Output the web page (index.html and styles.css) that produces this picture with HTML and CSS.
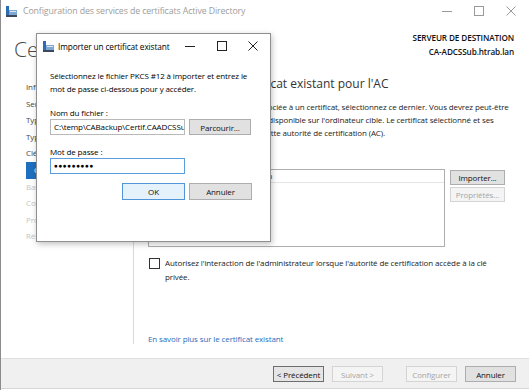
FILE: index.html
```html
<!DOCTYPE html>
<html lang="fr">
<head>
    <meta charset="UTF-8">
    <title>Configuration des services de certificats Active Directory</title>
    <link rel="stylesheet" href="styles.css">
</head>
<body>
    <div class="window">
        <div class="titlebar">
            <svg class="app-icon" width="11" height="11" viewBox="0 0 11 11">
                <rect x="0" y="0" width="3" height="9" fill="#2b6cb3"/>
                <rect x="3" y="4" width="8" height="5" fill="#7fa7cf"/>
                <rect x="0" y="9" width="11" height="2" fill="#3a4a5c"/>
                <rect x="4" y="5" width="6" height="1" fill="#dde8f3"/>
            </svg>
            <span class="title">Configuration des services de certificats Active Directory</span>
            <div class="controls">
                <span class="ctl"><svg width="10" height="10" viewBox="0 0 10 10"><path d="M0 5.5h10" stroke="#9a9a9a" stroke-width="1"/></svg></span>
                <span class="ctl"><svg width="10" height="10" viewBox="0 0 10 10"><rect x="0.5" y="0.5" width="9" height="9" fill="none" stroke="#9a9a9a"/></svg></span>
                <span class="ctl"><svg width="10" height="10" viewBox="0 0 10 10"><path d="M0.5 0.5l9 9M9.5 0.5l-9 9" stroke="#9a9a9a" stroke-width="1"/></svg></span>
            </div>
        </div>

        <header class="page-head">
            <h1>Certificat existant</h1>
            <div class="server">
                <div>SERVEUR DE DESTINATION</div>
                <div>CA-ADCSSub.htrab.lan</div>
            </div>
        </header>

        <div class="wizard">
            <nav class="steps">
                <div class="step">Informations d'identification</div>
                <div class="step">Services de rôle</div>
                <div class="step">Type d'installation</div>
                <div class="step">Type d'AC</div>
                <div class="step">Clé privée</div>
                <div class="step active">Certificat existant</div>
                <div class="step off">Base de données de certificats</div>
                <div class="step off">Confirmation</div>
                <div class="step off">Progression</div>
                <div class="step off">Résultats</div>
            </nav>

            <main class="content">
                <h2>Sélectionner un certificat existant pour l'AC</h2>
                <p class="intro">
                    <span class="line">Si une clé privée existante est associée à un certificat, sélectionnez ce dernier. Vous devrez peut-être</span>
                    <span class="line">importer le certificat s'il n'est pas disponible sur l'ordinateur cible. Le certificat sélectionné et ses</span>
                    <span class="line">clés privées seront utilisées par cette autorité de certification (AC).</span>
                </p>

                <div class="cert-row">
                    <div class="cert-list">
                        <div class="list-head">
                            <span class="col-a">Émis pour</span>
                            <span class="col-b">Date d'expiration</span>
                        </div>
                    </div>
                    <div class="side-buttons">
                        <button class="btn">Importer...</button>
                        <button class="btn" disabled>Propriétés...</button>
                    </div>
                </div>

                <label class="check">
                    <span class="box"></span>
                    <span class="check-text">Autorisez l'interaction de l'administrateur lorsque l'autorité de certification accède à la clé privée.</span>
                </label>

                <a class="more" href="#">En savoir plus sur le certificat existant</a>
            </main>
        </div>

        <footer class="actions">
            <button class="btn focus">&lt; Précédent</button>
            <button class="btn" disabled>Suivant &gt;</button>
            <button class="btn gap" disabled>Configurer</button>
            <button class="btn">Annuler</button>
        </footer>
    </div>

    <div class="dialog">
        <div class="dlg-title">
            <svg class="app-icon" width="11" height="11" viewBox="0 0 11 11">
                <rect x="0" y="0" width="3" height="9" fill="#2b6cb3"/>
                <rect x="3" y="4" width="8" height="5" fill="#7fa7cf"/>
                <rect x="0" y="9" width="11" height="2" fill="#3a4a5c"/>
                <rect x="4" y="5" width="6" height="1" fill="#dde8f3"/>
            </svg>
            <span class="title">Importer un certificat existant</span>
            <div class="controls">
                <span class="ctl"><svg width="10" height="10" viewBox="0 0 10 10"><path d="M0 5.5h10" stroke="#222" stroke-width="1"/></svg></span>
                <span class="ctl"><svg width="10" height="10" viewBox="0 0 10 10"><rect x="0.5" y="0.5" width="9" height="9" fill="none" stroke="#222"/></svg></span>
                <span class="ctl"><svg width="10" height="10" viewBox="0 0 10 10"><path d="M0.5 0.5l9 9M9.5 0.5l-9 9" stroke="#222" stroke-width="1"/></svg></span>
            </div>
        </div>
        <div class="dlg-body">
            <p class="dlg-text">Sélectionnez le fichier PKCS #12 à importer et entrez le mot de passe ci-dessous pour y accéder.</p>
            <div class="field-label">Nom du fichier :</div>
            <div class="field-row">
                <div class="input">C:\temp\CABackup\Certif.CAADCSSub.htrab.lan.p12</div>
                <button class="btn">Parcourir...</button>
            </div>
            <div class="field-label second">Mot de passe :</div>
            <div class="field-row">
                <div class="input focused">●●●●●●●●●</div>
            </div>
            <div class="dlg-buttons">
                <button class="btn default">OK</button>
                <button class="btn">Annuler</button>
            </div>
        </div>
    </div>
</body>
</html>
```

FILE: styles.css
```css
* {
    box-sizing: border-box;
}

body {
    margin: 0;
    width: 529px;
    height: 390px;
    overflow: hidden;
    position: relative;
    background: #ffffff;
    font-family: "Open Sans", "Noto Sans", sans-serif;
    font-size: 8px;
    letter-spacing: -0.12px;
    color: #111111;
}

p {
    margin: 0;
}

.btn {
    font-family: inherit;
    font-size: 8px;
    letter-spacing: -0.12px;
    color: #111111;
    background: #e1e1e1;
    border: 1px solid #adadad;
    padding: 0;
    height: 16px;
}

.btn:disabled {
    background: #f4f4f4;
    border-color: #d4d4d4;
    color: #a6a6a6;
}

/* main wizard window */
.window {
    height: 390px;
    display: flex;
    flex-direction: column;
    border-left: 1px solid #8c8c8c;
}

.titlebar {
    height: 22px;
    flex: none;
    display: flex;
    align-items: center;
    padding-left: 5px;
    color: #9d9d9d;
}

.titlebar .title {
    margin-left: 6px;
    font-size: 8.8px;
}

.controls {
    margin-left: auto;
    display: flex;
    padding-right: 2px;
}

.controls .ctl {
    width: 32px;
    height: 22px;
    display: flex;
    align-items: center;
    justify-content: center;
}

.page-head {
    height: 48px;
    flex: none;
    display: flex;
    justify-content: space-between;
    padding: 9px 15px 0 13px;
}

.page-head h1 {
    margin: 5px 0 0;
    font-size: 21px;
    font-weight: 300;
    letter-spacing: 0;
    color: #4a4a4a;
    line-height: 26px;
}

.server {
    text-align: right;
    font-weight: 600;
    font-size: 8.2px;
    line-height: 14px;
    color: #111111;
}

.wizard {
    flex: 1;
    display: flex;
}

.steps {
    width: 133px;
    flex: none;
    padding-top: 9px;
    padding-left: 25px;
    margin-bottom: 14px;
    border-right: 1px solid #d9d9d9;
    color: #444444;
}

.step {
    height: 16.6px;
    line-height: 16.6px;
    white-space: nowrap;
    overflow: hidden;
}

.step.active {
    background: #1f6fc0;
    color: #ffffff;
    padding-left: 8px;
}

.step.off {
    color: #c4c4c4;
}

.content {
    flex: 1;
    display: flex;
    flex-direction: column;
    padding: 5px 14px 12px 14px;
    color: #222222;
}

.content h2 {
    margin: 0;
    font-size: 12px;
    font-weight: 400;
    letter-spacing: 0;
    line-height: 18px;
    color: #333333;
    white-space: nowrap;
}

.intro {
    margin-top: 7px;
    line-height: 13px;
}

.intro .line {
    display: block;
    white-space: nowrap;
}

.cert-row {
    margin-top: 30px;
    display: flex;
    gap: 5px;
}

.cert-list {
    width: 297px;
    height: 78px;
    border: 1px solid #adadad;
    background: #ffffff;
}

.list-head {
    height: 13px;
    line-height: 12px;
    border-bottom: 1px solid #e5e5e5;
    display: flex;
    white-space: nowrap;
    color: #333333;
}

.col-a {
    width: 59px;
    padding-left: 4px;
}

.col-b {
    padding-left: 2px;
}

.side-buttons {
    display: flex;
    flex-direction: column;
    gap: 2px;
    padding-top: 1px;
}

.side-buttons .btn {
    width: 55px;
    height: 15px;
}

.check {
    margin-top: 9px;
    display: flex;
    gap: 5px;
    line-height: 14px;
}

.check-text {
    max-width: 335px;
}

.check .box {
    flex: none;
    width: 11px;
    height: 11px;
    margin-top: 2px;
    margin-left: 1px;
    border: 1px solid #333333;
    background: #ffffff;
}

.more {
    margin-top: auto;
    line-height: 14px;
    color: #2a6ebd;
    text-decoration: none;
}

.actions {
    height: 31px;
    flex: none;
    margin-bottom: 1px;
    background: #f0f0f0;
    border-top: 1px solid #dfdfdf;
    border-bottom: 1px solid #d6d6d6;
    display: flex;
    justify-content: flex-end;
    align-items: flex-start;
    gap: 8px;
    padding: 7px 13px 0 0;
}

.actions .btn {
    width: 51px;
}

.actions .btn.focus {
    border-color: #6e6e6e;
    background: #e5e5e5;
}

.actions .btn.gap {
    margin-left: 15px;
}

/* import dialog, floats over the wizard */
.dialog {
    position: absolute;
    left: 36px;
    top: 33px;
    width: 235px;
    height: 209px;
    background: #ffffff;
    border: 1px solid #8f8f8f;
    box-shadow: 1px 2px 6px rgba(0, 0, 0, 0.25);
    color: #000000;
}

.dlg-title {
    height: 24px;
    display: flex;
    align-items: center;
    padding-left: 6px;
}

.dlg-title .title {
    margin-left: 4px;
    font-size: 8.3px;
    white-space: nowrap;
}

.dlg-title .controls {
    padding-right: 1px;
}

.dlg-title .ctl {
    width: 31.5px;
    height: 24px;
}

.dlg-body {
    padding: 11px 16px 0 13px;
}

.dlg-text {
    line-height: 13px;
}

.field-label {
    margin-top: 11px;
    line-height: 13px;
}

.field-label.second {
    margin-top: 10px;
}

.field-row {
    margin-top: 0;
    display: flex;
    gap: 4px;
}

.input {
    width: 135px;
    height: 16px;
    border: 1px solid #b9b9b9;
    padding: 0 3px;
    line-height: 14px;
    white-space: nowrap;
    overflow: hidden;
}

.input.focused {
    border-color: #5a9ee0;
    font-size: 6.5px;
    letter-spacing: 0.5px;
}

.field-row .btn {
    width: 62px;
}

.dlg-buttons {
    margin-top: 9px;
    display: flex;
    justify-content: flex-end;
    gap: 4px;
    padding-right: 2px;
}

.dlg-buttons .btn {
    width: 63px;
    height: 17px;
}

.dlg-buttons .btn.default {
    background: #e5f1fb;
    border-color: #4f95d8;
}
```
